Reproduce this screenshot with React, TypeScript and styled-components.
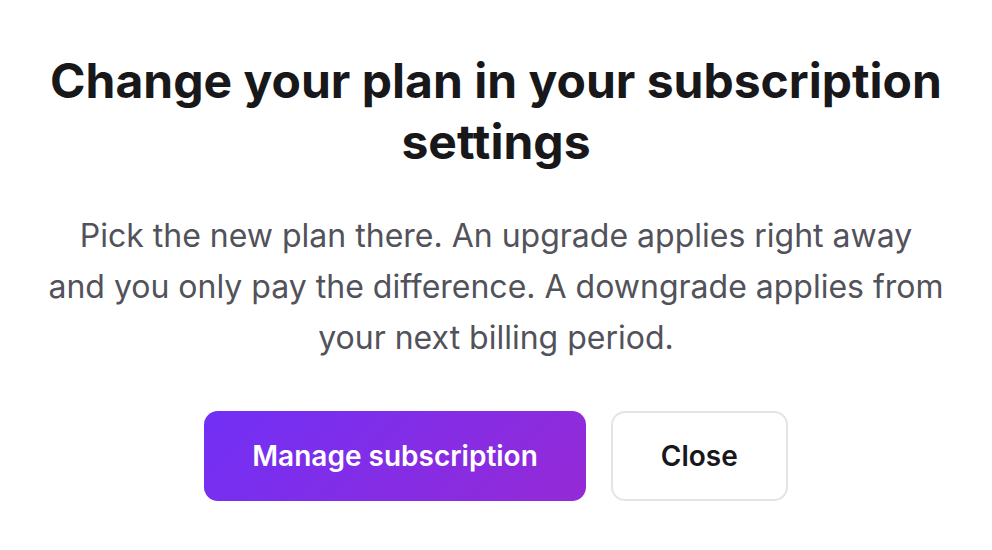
import styled, { createGlobalStyle } from 'styled-components';

const GlobalStyle = createGlobalStyle`
  html, body {
    margin: 0;
    padding: 0;
    background: #ffffff;
  }
  body {
    font-family: Inter, "Noto Sans", sans-serif;
    -webkit-font-smoothing: antialiased;
  }
`;

const Dialog = styled.div`
  width: 992px;
  height: 550px;
  box-sizing: border-box;
  padding: 50px 24px 0;
  display: flex;
  flex-direction: column;
  align-items: center;
  text-align: center;
`;

const Title = styled.h1`
  margin: 0;
  font-size: 48px;
  line-height: 61px;
  font-weight: 700;
  color: #18181b;
`;

const Description = styled.p`
  margin: 38px 0 0;
  font-size: 32px;
  line-height: 51px;
  font-weight: 400;
  color: #52525b;
`;

const Actions = styled.div`
  margin-top: 48px;
  display: flex;
  gap: 25px;
`;

const Button = styled.button<{ $primary?: boolean }>`
  height: 90px;
  padding: 0 48px;
  border-radius: 14px;
  font-family: Inter, "Noto Sans", sans-serif;
  font-size: 28px;
  font-weight: 600;
  cursor: pointer;
  border: ${(p) => (p.$primary ? 'none' : '2px solid #e4e4e7')};
  color: ${(p) => (p.$primary ? '#ffffff' : '#18181b')};
  background: ${(p) =>
    p.$primary ? 'linear-gradient(135deg, #7130f6 0%, #952ad6 100%)' : '#ffffff'};
`;

export default function App() {
  return (
    <>
      <GlobalStyle />
      <Dialog>
        <Title>
          Change your plan in your subscription
          <br />
          settings
        </Title>
        <Description>
          Pick the new plan there. An upgrade applies right away
          <br />
          and you only pay the difference. A downgrade applies from
          <br />
          your next billing period.
        </Description>
        <Actions>
          <Button $primary>Manage subscription</Button>
          <Button>Close</Button>
        </Actions>
      </Dialog>
    </>
  );
}
